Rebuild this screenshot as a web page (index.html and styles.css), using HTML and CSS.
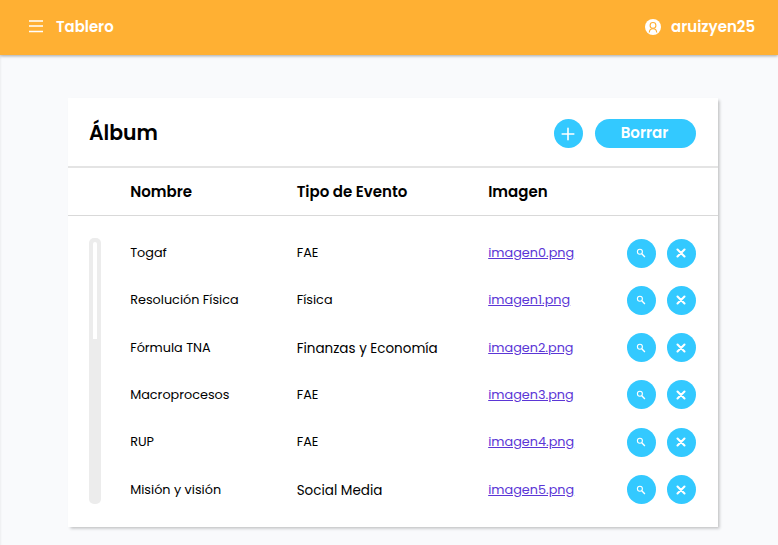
FILE: index.html
```
<!DOCTYPE html>
<html lang="es">
<head>
<meta charset="utf-8">
<title>Tablero</title>
<link rel="stylesheet" href="styles.css">
</head>
<body>
<svg class="defs" width="0" height="0">
  <symbol id="search" viewBox="0 0 10 10"><circle cx="3.9" cy="3.8" r="2.5" fill="none" stroke="#fff" stroke-width="1.1"/><path d="M5.8 5.8 8.9 9" stroke="#fff" stroke-width="1.4"/></symbol>
  <symbol id="close" viewBox="0 0 10 10"><path d="M1.5 1.5 8.5 8.5M8.5 1.5 1.5 8.5" stroke="#fff" stroke-width="2.1" stroke-linecap="round"/></symbol>
</svg>
<header class="topbar">
  <svg class="menu" viewBox="0 0 14 13"><path d="M0 1H14M0 6H14M0 11.5H14" stroke="#fff" stroke-width="1.4"/></svg>
  <span class="brand">Tablero</span>
  <svg class="avatar" viewBox="0 0 16 16"><circle cx="8" cy="8" r="8" fill="#fff"/><g fill="none" stroke="#ffb033" stroke-width="1.1"><circle cx="8" cy="6.4" r="2.9"/><path d="M4.3 13.6C4.4 10.8 5.8 9.7 8 9.7S11.6 10.8 11.7 13.6"/></g></svg>
  <span class="user">aruizyen25</span>
</header>
<main class="card">
  <div class="title-row">
    <h1>Álbum</h1>
    <button class="round" aria-label="+"><svg class="plus" viewBox="0 0 14 14"><path d="M7 1.2V12.8M1.2 7H12.8" stroke="#fff" stroke-width="1.6" stroke-linecap="round"/></svg></button>
    <button class="pill">Borrar</button>
  </div>
  <div class="head">
    <span>Nombre</span><span>Tipo de Evento</span><span>Imagen</span>
  </div>
  <div class="body">
    <div class="track"><div class="thumb"></div></div>
    <div class="rows">
      <div class="row"><span>Togaf</span><span>FAE</span><a>imagen0.png</a><button class="round"><svg><use href="#search"/></svg></button><button class="round"><svg><use href="#close"/></svg></button></div>
      <div class="row"><span>Resolución Física</span><span>Física</span><a>imagen1.png</a><button class="round"><svg><use href="#search"/></svg></button><button class="round"><svg><use href="#close"/></svg></button></div>
      <div class="row"><span>Fórmula TNA</span><span class="large">Finanzas y Economía</span><a>imagen2.png</a><button class="round"><svg><use href="#search"/></svg></button><button class="round"><svg><use href="#close"/></svg></button></div>
      <div class="row"><span>Macroprocesos</span><span>FAE</span><a>imagen3.png</a><button class="round"><svg><use href="#search"/></svg></button><button class="round"><svg><use href="#close"/></svg></button></div>
      <div class="row"><span>RUP</span><span>FAE</span><a>imagen4.png</a><button class="round"><svg><use href="#search"/></svg></button><button class="round"><svg><use href="#close"/></svg></button></div>
      <div class="row"><span>Misión y visión</span><span class="large">Social Media</span><a>imagen5.png</a><button class="round"><svg><use href="#search"/></svg></button><button class="round"><svg><use href="#close"/></svg></button></div>
    </div>
  </div>
</main>
</body>
</html>
```
FILE: styles.css
```
* { box-sizing: border-box; }
body {
  margin: 0;
  height: 545px;
  overflow: hidden;
  background: #f9fafc;
  box-shadow: inset 2px 0 2px -1px rgba(0, 0, 0, .05);
  color: #000;
  font: 12.8px/20px Poppins, Inter, sans-serif;
}
.defs { display: block; height: 0; }
.topbar {
  display: flex;
  align-items: center;
  height: 55px;
  padding: 0 23px 2px 29px;
  background: #ffb033;
  color: #fff;
  font-weight: 600;
  box-shadow: 0 1px 3px rgba(0, 0, 0, .35);
}
.menu { width: 14px; height: 13px; }
.brand { margin-left: 13px; font-size: 14.9px; }
.avatar { width: 16px; height: 16px; margin-left: auto; }
.user { width: 84px; margin-left: 10px; font-size: 15px; }
.card {
  width: 650px;
  height: 429px;
  margin: 43px 0 0 67.5px;
  background: #fff;
  box-shadow: 1.5px 1.5px 3px rgba(0, 0, 0, .24);
}
.title-row {
  display: flex;
  align-items: center;
  height: 70px;
  padding: 2px 22px 0 21.5px;
  border-bottom: 2px solid #e4e4e4;
}
h1 { margin: 0 auto 0 0; font-size: 20.4px; font-weight: 600; }
button {
  padding: 0;
  border: 0;
  background: #33c9ff;
  color: #fff;
  font: inherit;
}
.round {
  display: flex;
  flex: none;
  align-items: center;
  justify-content: center;
  width: 29px;
  height: 29px;
  border-radius: 50%;
}
.round svg { width: 10px; height: 10px; }
.round .plus { width: 14px; height: 14px; margin-top: 2px; }
.pill {
  width: 101px;
  height: 29px;
  margin-left: 12px;
  padding-right: 1px;
  border-radius: 15px;
  font-size: 15px;
  font-weight: 600;
}
.head, .row {
  display: grid;
  grid-template-columns: 166.5px 191.5px 138.5px 40px 29px;
  align-items: center;
}
.head {
  height: 48px;
  padding-left: 62.7px;
  border-bottom: 1px solid #d9d9d9;
  font-size: 15px;
  font-weight: 600;
}
.body { display: flex; padding: 13.4px 0 0 21.5px; }
.track {
  width: 12px;
  height: 266px;
  margin: 8.6px 29.2px 0 0;
  padding: 4px;
  border-radius: 5px;
  background: #ececec;
}
.thumb { height: 97px; border-radius: 2px 2px 0 0; background: #fff; }
.row { height: 47.3px; }
.row span { white-space: nowrap; }
a { color: #5b36d6; text-decoration: underline; }
.row .large { font-size: 13.5px; padding-top: 2px; }
```
